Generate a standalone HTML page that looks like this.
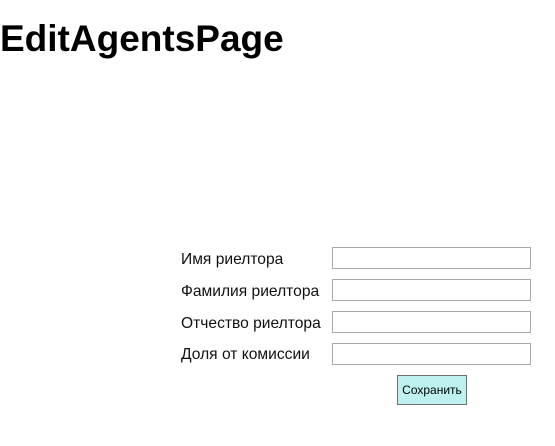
<!DOCTYPE html>
<html><head><meta charset="utf-8"><style>
body{margin:0;width:555px;height:446px;background:#fff;position:relative;overflow:hidden;font-family:"Liberation Sans","DejaVu Sans",sans-serif;}
h1{position:absolute;left:0;top:14px;margin:0;font-size:37px;font-weight:bold;color:#000;letter-spacing:0;line-height:50px;}
.l{position:absolute;left:181px;font-size:15.6px;color:#111;line-height:20px;}
.i{position:absolute;left:332px;width:197px;height:20px;border:1px solid #a9a9a9;background:#fff;}
.b{position:absolute;left:397px;top:375px;width:68px;height:28px;border:1px solid #707070;background:#bff0f0;font-size:12px;line-height:28px;text-align:center;color:#000;}
</style></head><body>
<h1>EditAgentsPage</h1>
<div class="l" style="top:250px">Имя риелтора</div>
<div class="l" style="top:282px">Фамилия риелтора</div>
<div class="l" style="top:314px">Отчество риелтора</div>
<div class="l" style="top:345px">Доля от комиссии</div>
<div class="i" style="top:247px"></div>
<div class="i" style="top:279px"></div>
<div class="i" style="top:311px"></div>
<div class="i" style="top:343px"></div>
<div class="b">Сохранить</div>
</body></html>
